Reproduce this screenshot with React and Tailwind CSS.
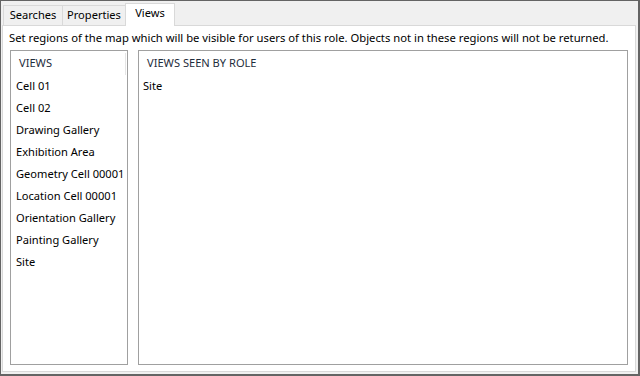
const views = [
  'Cell 01',
  'Cell 02',
  'Drawing Gallery',
  'Exhibition Area',
  'Geometry Cell 00001',
  'Location Cell 00001',
  'Orientation Gallery',
  'Painting Gallery',
  'Site',
]

const seen = ['Site']

export default function App() {
  return (
    <div
      className="w-[640px] h-[376px] bg-[#f0f0f0] border-l border-t border-r-2 border-b-2 border-[#646464] flex flex-col px-[1px] pt-[1px] pb-[2px] text-[11.1px] text-black whitespace-nowrap"
      style={{ fontFamily: '"Noto Sans", "Open Sans", sans-serif' }}
    >
      {/* Tabs */}
      <div className="flex items-end h-[23px] pl-[1px] relative z-10">
        <Tab label="Searches" width="w-[60px]" />
        <Tab label="Properties" width="w-[64px]" />
        <Tab label="Views" width="w-[50px]" active />
      </div>

      {/* Panel */}
      <div className="flex-1 bg-white border border-[#d9d9d9] mr-[1px] flex flex-col">
        <div className="h-[24px] flex items-center pl-[6px] pt-[1px] text-[11.25px]">
          Set regions of the map which will be visible for users of this role. Objects not in these regions will not be returned.
        </div>
        <div className="flex gap-[10px] pl-[7px] pr-[7px] h-[315px]">
          <ListBox title="VIEWS" items={views} width="w-[118px] shrink-0" itemPad="pl-[5px]" divider />
          <ListBox title="VIEWS SEEN BY ROLE" items={seen} width="flex-1" itemPad="pl-[4px]" />
        </div>
      </div>
    </div>
  )
}

function Tab({ label, width, active }) {
  if (active) {
    return (
      <div className={`${width} h-[23px] -mb-px bg-white border border-b-0 border-[#d9d9d9] flex items-center justify-center pb-[3px]`}>
        {label}
      </div>
    )
  }
  return (
    <div className={`${width} h-[20px] bg-[#f0f0f0] border border-b-0 border-[#d9d9d9] -mr-px flex items-center justify-center`}>
      {label}
    </div>
  )
}

function ListBox({ title, items, width, itemPad, divider }) {
  return (
    <div className={`${width} h-full border border-[#a0a0a0] bg-white flex flex-col overflow-hidden`}>
      <div className="h-[24px] shrink-0 flex items-center relative pl-[8px] pt-[1px] text-[#1e2d3c]">
        {title}
        {divider && <div className="absolute right-[1px] top-[2px] bottom-0 w-px bg-[#e5e5e5]" />}
      </div>
      {items.map((item) => (
        <div key={item} className={`h-[22px] shrink-0 flex items-center pt-[1px] ${itemPad}`}>
          {item}
        </div>
      ))}
    </div>
  )
}
